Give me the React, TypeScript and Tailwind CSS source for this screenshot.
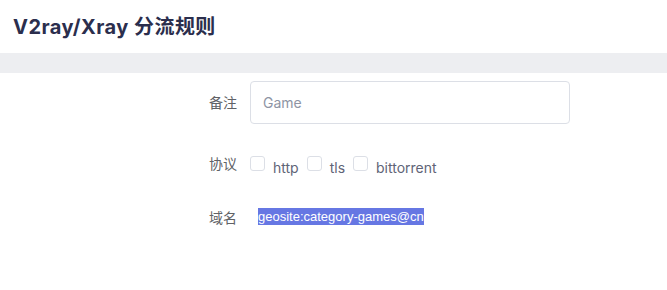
import React from 'react';

const Check: React.FC<{ label: string }> = ({ label }) => (
  <label className="flex items-center gap-[8px]">
    <span className="w-[15px] h-[15px] rounded-[3px] border border-[#dcdfe6] bg-white flex-shrink-0"></span>
    <span className="pt-[9px] text-[14px] leading-[20px] text-[#5f6477]">{label}</span>
  </label>
);

const FormRow: React.FC<{ label: string; className?: string; children: React.ReactNode }> = ({ label, className, children }) => (
  <div className={`flex items-center ${className ?? ''}`}>
    <div className="w-[238px] pr-[1px] text-right text-[14px] text-[#606266] [font-family:'Noto_Sans_CJK_SC',sans-serif]">{label}</div>
    <div className="pl-[12px] flex items-center">{children}</div>
  </div>
);

export default function App() {
  return (
    <div className="w-[667px] h-[290px] bg-white overflow-hidden [font-family:Inter,'Noto_Sans_CJK_SC',sans-serif]">
      <header className="h-[53px] flex items-center px-[13px] bg-white shadow-[0_1px_3px_rgba(0,0,0,0.03)]">
        <h1 className="text-[20px] font-bold text-[#2b2e4d] tracking-[0.45px]">V2ray/Xray 分流规则</h1>
      </header>
      <div className="h-[20px] bg-[#edeef1]"></div>

      <div className="pt-[8px]">
        <FormRow label="备注" className="h-[43px]">
          <input
            className="w-[320px] h-[43px] rounded-[4px] border border-[#dcdfe6] px-[12px] text-[14px] text-[#5f6477] outline-none placeholder:text-[#8e94a4]"
            placeholder="Game"
          />
        </FormRow>

        <FormRow label="协议" className="h-[24px] mt-[27px]">
          <div className="flex items-center gap-[8px]">
            <Check label="http" />
            <Check label="tls" />
            <Check label="bittorrent" />
          </div>
        </FormRow>

        <FormRow label="域名" className="h-[25px] mt-[30px]">
          <span className="ml-[8px] mt-[-2px] bg-[#6677e3] text-white text-[13px] leading-[17px] [font-family:'Liberation_Sans',Arial,sans-serif]">
            geosite:category-games@cn
          </span>
        </FormRow>
      </div>
    </div>
  );
}
